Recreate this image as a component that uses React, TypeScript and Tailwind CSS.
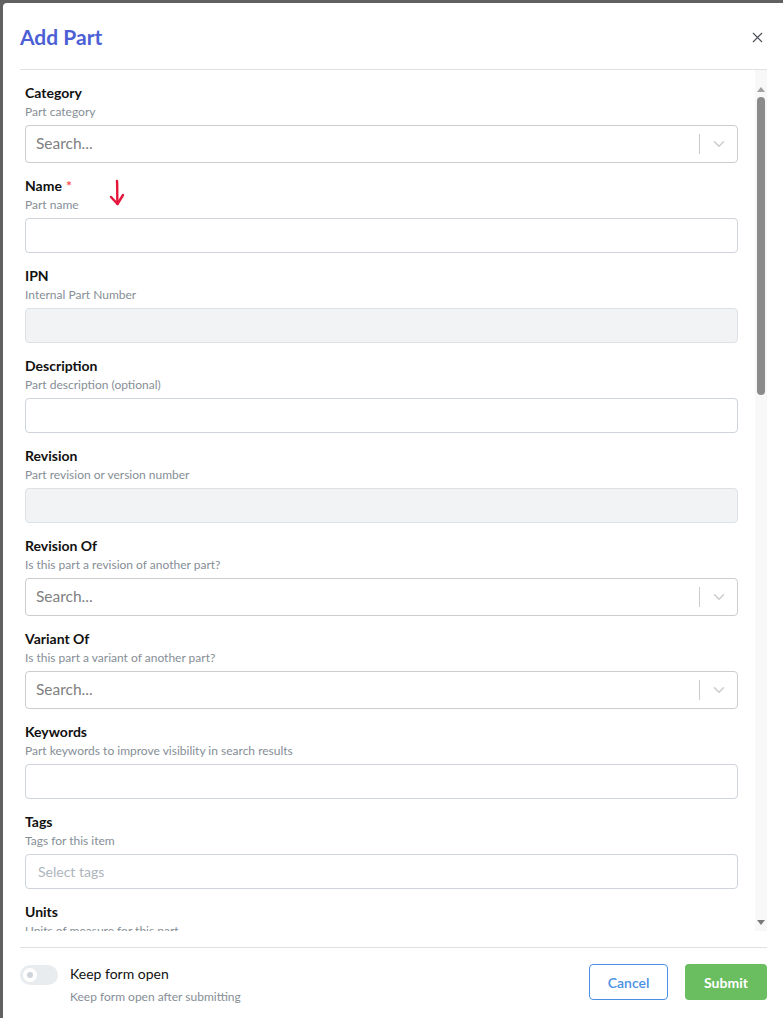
import { X, ChevronDown } from "lucide-react";

type FieldType = {
  label: string;
  description: string;
  kind: "select" | "text" | "disabled" | "tags";
  required?: boolean;
};

const fields: FieldType[] = [
  { label: "Category", description: "Part category", kind: "select" },
  { label: "Name", description: "Part name", kind: "text", required: true },
  { label: "IPN", description: "Internal Part Number", kind: "disabled" },
  { label: "Description", description: "Part description (optional)", kind: "text" },
  { label: "Revision", description: "Part revision or version number", kind: "disabled" },
  { label: "Revision Of", description: "Is this part a revision of another part?", kind: "select" },
  { label: "Variant Of", description: "Is this part a variant of another part?", kind: "select" },
  { label: "Keywords", description: "Part keywords to improve visibility in search results", kind: "text" },
  { label: "Tags", description: "Tags for this item", kind: "tags" },
  { label: "Units", description: "Units of measure for this part", kind: "text" },
];

function Field({ field }: { field: FieldType }) {
  return (
    <div className="relative flex flex-col pb-[13px]">
      <div className="text-[14px] leading-5 font-bold text-[#111]">
        {field.label}
        {field.required && <span className="text-[#fa5252] ml-1">*</span>}
      </div>
      <div className="text-[12px] leading-[18px] text-[#868e96]">{field.description}</div>
      <div className="mt-1">
        {field.kind === "select" && (
          <div className="h-[38px] border border-[#cccccc] rounded-[4px] flex items-center bg-white">
            <span className="flex-1 pl-[10px] text-[15.5px] text-[#808080]">Search...</span>
            <span className="w-px h-[20px] bg-[#cccccc]" />
            <span className="w-[37px] flex items-center justify-center text-[#cccccc]">
              <ChevronDown size={18} strokeWidth={2} />
            </span>
          </div>
        )}
        {field.kind === "text" && (
          <div className="h-[35px] border border-[#ced4da] rounded-[4px] bg-white" />
        )}
        {field.kind === "disabled" && (
          <div className="h-[35px] border border-[#dee2e6] rounded-[4px] bg-[#f1f3f5]" />
        )}
        {field.kind === "tags" && (
          <div className="h-[35px] border border-[#ced4da] rounded-[4px] bg-white flex items-center pl-3 text-[14px] text-[#adb5bd]">
            Select tags
          </div>
        )}
      </div>
      {field.required && (
        <svg
          className="absolute left-[83px] top-[3px]"
          width="18"
          height="30"
          viewBox="0 0 18 30"
          fill="none"
          stroke="#e5163c"
          strokeWidth="2.4"
          strokeLinecap="round"
          strokeLinejoin="round"
        >
          <path d="M9 2 C 9.5 9, 9 17, 9.5 25" />
          <path d="M3 18 L9.5 25 L15 16" />
        </svg>
      )}
    </div>
  );
}

export default function App() {
  return (
    <div className="w-[783px] h-[1018px] bg-[#616161] pt-[3px] pl-[3px] overflow-hidden" style={{ fontFamily: "Lato, 'Noto Sans', sans-serif" }}>
      <div className="h-full bg-white rounded-tl-[4px] pl-[17px] pr-[16px] flex flex-col">
        <div className="h-[67px] shrink-0 flex items-center justify-between border-b border-[#dee2e6] pt-[2px]">
          <h2 className="text-[21px] font-bold text-[#4c5fd5]">Add Part</h2>
          <X size={17} strokeWidth={1.6} className="text-[#495057] mr-[1px]" />
        </div>

        <div className="h-[861px] shrink-0 flex overflow-hidden">
          <div className="flex-1 pl-[5px] pt-[13px] pr-[17px] overflow-hidden">
            {fields.map((f, i) => (
              <Field key={i} field={f} />
            ))}
          </div>
          <div className="w-[12px] bg-[#f8f8f8] flex flex-col items-center pt-[17px] pb-[6px]">
            <div className="w-0 h-0 border-l-[4px] border-r-[4px] border-b-[5px] border-l-transparent border-r-transparent border-b-[#a0a0a0]" />
            <div className="w-[8px] h-[298px] mt-[5px] bg-[#8b8b8b] rounded-full" />
            <div className="flex-1" />
            <div className="w-0 h-0 border-l-[4px] border-r-[4px] border-t-[5px] border-l-transparent border-r-transparent border-t-[#7a7a7a]" />
          </div>
        </div>

        <div className="mt-[16px] border-t border-[#dee2e6] pt-[16px] flex items-start justify-between">
          <div className="flex items-start gap-3">
            <div className="w-[38px] h-[20px] mt-[1px] rounded-full bg-[#e9ecef] flex items-center pl-[3px]">
              <div className="w-[14px] h-[14px] rounded-full bg-white flex items-center justify-center">
                <div className="w-[6px] h-[6px] rounded-full bg-[#ced4da]" />
              </div>
            </div>
            <div className="flex flex-col">
              <span className="text-[14px] leading-5 text-[#111]">Keep form open</span>
              <span className="text-[12px] leading-4 mt-[5px] text-[#868e96]">Keep form open after submitting</span>
            </div>
          </div>
          <div className="flex gap-[17px]">
            <button className="h-[36px] w-[79px] rounded-[4px] border border-[#4a90e2] text-[#4a90e2] text-[14px] font-semibold bg-white">
              Cancel
            </button>
            <button className="h-[36px] w-[82px] rounded-[4px] bg-[#6abe5f] text-white text-[14px] font-bold">
              Submit
            </button>
          </div>
        </div>
      </div>
    </div>
  );
}
